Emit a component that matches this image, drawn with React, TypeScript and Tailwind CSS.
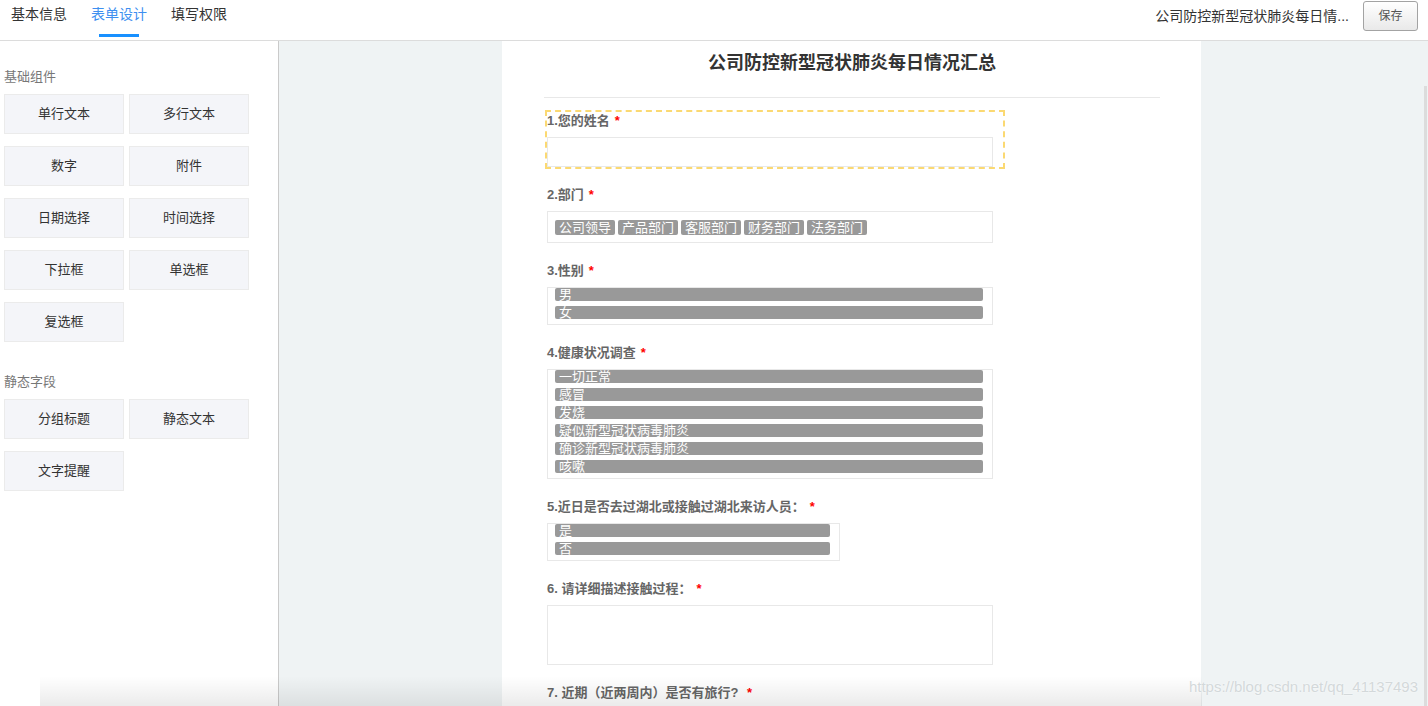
import React from 'react';

const FONT = { fontFamily: '"Liberation Sans", "Noto Sans CJK SC", sans-serif' };

const basicWidgets = ['单行文本', '多行文本', '数字', '附件', '日期选择', '时间选择', '下拉框', '单选框', '复选框'];
const staticWidgets = ['分组标题', '静态文本', '文字提醒'];

function WidgetGroup({ title, items }: { title: string; items: string[] }) {
  return (
    <div>
      <div className="text-[13px] leading-[16px] text-[#777] mb-[9px]">{title}</div>
      <div className="grid grid-cols-[120px_120px] gap-x-[5px] gap-y-[12px]">
        {items.map((item) => (
          <div
            key={item}
            className="h-[40px] flex items-center justify-center bg-[#f4f5f9] border border-[#ebebeb] text-[13px] text-[#333]"
          >
            {item}
          </div>
        ))}
      </div>
    </div>
  );
}

function Field({
  label,
  active,
  children,
}: {
  label: string;
  active?: boolean;
  children: React.ReactNode;
}) {
  return (
    <div
      className={`w-[460px] border-2 pt-[1px] mb-[15px] ${
        active ? 'border-dashed border-[#fbd972]' : 'border-transparent'
      }`}
    >
      <div className="text-[13px] leading-[16px] font-bold text-[#666]">
        {label}
        <span className="text-[#f00] ml-[5px]">*</span>
      </div>
      <div className="mt-[8px]">{children}</div>
    </div>
  );
}

function Bars({ items, width = 'w-[446px]' }: { items: string[]; width?: string }) {
  return (
    <div className={`${width} border border-[#e8e8e8] pl-[7px] pr-[9px] pb-[5px] flex flex-col gap-[5px]`}>
      {items.map((item) => (
        <div
          key={item}
          className="h-[13px] leading-[13px] bg-[#999] rounded-[2px] text-white text-[13px] pl-[4px] whitespace-nowrap"
        >
          {item}
        </div>
      ))}
    </div>
  );
}

export default function App() {
  return (
    <div className="w-[1428px] h-[706px] overflow-hidden bg-white relative" style={FONT}>
      {/* header */}
      <div className="h-[41px] border-b border-[#dcdcdc] flex justify-between">
        <div className="flex pl-[11px] gap-[24px]">
          {['基本信息', '表单设计', '填写权限'].map((tab, i) => (
            <div key={tab} className="flex flex-col items-center">
              <div className={`text-[14px] leading-[28px] ${i === 1 ? 'text-[#3d8ff0]' : 'text-[#333]'}`}>{tab}</div>
              <div className={`mt-[6px] h-[3px] w-[40px] ${i === 1 ? 'bg-[#1890ff]' : 'bg-transparent'}`} />
            </div>
          ))}
        </div>
        <div className="flex items-start pt-[1px] pr-[10px]">
          <div className="text-[14px] leading-[30px] text-[#333] mr-[14px]">公司防控新型冠状肺炎每日情...</div>
          <button className="h-[30px] w-[55px] border border-[#a3a3a3] rounded-[3px] bg-gradient-to-b from-white to-[#e9e9e9] text-[12px] text-[#555]">
            保存
          </button>
        </div>
      </div>

      <div className="flex h-[665px]">
        {/* sidebar */}
        <div className="w-[279px] shrink-0 border-r border-[#cacaca] pt-[28px] px-[4px]">
          <WidgetGroup title="基础组件" items={basicWidgets} />
          <div className="h-[32px]" />
          <WidgetGroup title="静态字段" items={staticWidgets} />
        </div>

        {/* canvas */}
        <div className="flex-1 bg-[#eff3f4] relative">
          <div className="ml-[223px] w-[699px] h-full bg-white px-[42px]">
            <div className="h-[57px] border-b border-[#e8e8e8] mr-[-1px]">
              <div className="text-center text-[18px] leading-[44px] font-bold text-[#333]">
                公司防控新型冠状肺炎每日情况汇总
              </div>
            </div>
            <div className="pt-[12px] pl-[1px]">
              <Field label="1.您的姓名" active>
                <div className="w-[446px] h-[30px] border border-[#e8e8e8]" />
              </Field>
              <Field label="2.部门">
                <div className="w-[446px] h-[32px] border border-[#e8e8e8] pl-[7px] flex items-center gap-[3px]">
                  {['公司领导', '产品部门', '客服部门', '财务部门', '法务部门'].map((t) => (
                    <span key={t} className="h-[15px] leading-[15px] px-[4px] bg-[#999] rounded-[2px] text-white text-[13px]">
                      {t}
                    </span>
                  ))}
                </div>
              </Field>
              <Field label="3.性别">
                <Bars items={['男', '女']} />
              </Field>
              <Field label="4.健康状况调查">
                <Bars items={['一切正常', '感冒', '发烧', '疑似新型冠状病毒肺炎', '确诊新型冠状病毒肺炎', '咳嗽']} />
              </Field>
              <Field label="5.近日是否去过湖北或接触过湖北来访人员：">
                <Bars items={['是', '否']} width="w-[293px]" />
              </Field>
              <Field label="6. 请详细描述接触过程：">
                <div className="w-[446px] h-[60px] border border-[#e8e8e8]" />
              </Field>
              <Field label="7. 近期（近两周内）是否有旅行? ">
                <div className="w-[446px] h-[30px] border border-[#e8e8e8]" />
              </Field>
            </div>
          </div>
          {/* scrollbar thumb */}
          <div className="absolute right-[1px] top-[45px] bottom-0 w-[3px] bg-[#dcdcdc]" />
        </div>
      </div>

      {/* bottom shadow */}
      <div className="absolute left-[40px] w-[1162px] bottom-0 h-[30px] bg-gradient-to-b from-transparent to-black/[0.08] pointer-events-none" />

      {/* watermark */}
      <div className="absolute right-[10px] bottom-[8px] text-[15px] text-[#d3d8da] [text-shadow:0_0_2px_#ffffff] pointer-events-none">
        https://blog.csdn.net/qq_41137493
      </div>
    </div>
  );
}
